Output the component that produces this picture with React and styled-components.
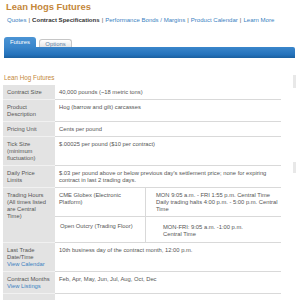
import React from 'react';
import styled, { createGlobalStyle } from 'styled-components';

const Global = createGlobalStyle`
  html, body { margin: 0; padding: 0; background: #fff; }
  body { font-family: "Liberation Sans", Arial, sans-serif; }
`;

const Page = styled.div`
  width: 298px;
  height: 300px;
  overflow: hidden;
  box-sizing: border-box;
  padding: 1px 0 0 3px;
`;

const Title = styled.h1`
  margin: 0 0 0 3px;
  font-size: 9.4px;
  line-height: 12px;
  font-weight: bold;
  color: #c4873a;
`;

const Nav = styled.nav`
  margin: 3px 0 0 4px;
  font-size: 6.05px;
  line-height: 8px;
  color: #555;
  white-space: nowrap;
`;

const NavLink = styled.a`
  color: ${(p) => (p.$current ? '#333' : '#3a7fc1')};
  font-weight: ${(p) => (p.$current ? 'bold' : 'normal')};
  text-decoration: none;
`;

const Sep = styled.span`
  color: #555;
  margin: 0 2px;
`;

const TabRow = styled.div`
  display: flex;
  align-items: flex-end;
  gap: 3px;
  margin: 13px 0 0 1px;
  height: 10px;
`;

const Tab = styled.div`
  box-sizing: border-box;
  width: ${(p) => p.$w}px;
  height: ${(p) => (p.$active ? 10 : 8)}px;
  border-radius: 3px 3px 0 0;
  font-size: 5.9px;
  line-height: ${(p) => (p.$active ? 10 : 8)}px;
  text-align: center;
  color: ${(p) => (p.$active ? '#fff' : '#5d7fa6')};
  background: ${(p) =>
    p.$active ? 'linear-gradient(#4b94d4, #3a86cb)' : 'linear-gradient(#ffffff, #e6e6e6)'};
  border: ${(p) => (p.$active ? 'none' : '1px solid #c6c6c6')};
  border-bottom: none;
`;

const Bar = styled.div`
  margin: 0 3px 0 1px;
  height: 11px;
  border-radius: 0 2px 0 0;
  background: linear-gradient(#3a86cb, #2472bb 70%, #1a5f9f);
`;

const Content = styled.div`
  display: flex;
  align-items: flex-start;
`;

const Main = styled.div`
  width: 280px;
`;

const Gutter = styled.div`
  display: flex;
  flex-direction: column;
  margin-left: 10px;
  width: 3px;
`;

const Mark = styled.div`
  margin-top: ${(p) => p.$top}px;
  height: ${(p) => p.$h}px;
  background: #e8e8e8;
`;

const SubHeading = styled.h2`
  margin: 16px 0 3px 1px;
  font-size: 6.3px;
  line-height: 8px;
  font-weight: normal;
  color: #c4873a;
`;

const Table = styled.div`
  width: 278px;
  font-size: 5.8px;
  line-height: 7px;
  color: #555;
`;

const Row = styled.div`
  display: grid;
  grid-template-columns: 52px 226px;
`;

const Label = styled.div`
  background: #e3e3e3;
  padding: 4px 3px 3px 4px;
  border-bottom: 1px solid #f1f1f1;
`;

const Value = styled.div`
  padding: ${(p) => (p.$flush ? '0' : '4px 4px 3px 4px')};
  border-bottom: 1px solid #d9d9d9;
`;

const SubRow = styled.div`
  display: grid;
  grid-template-columns: 91px 135px;
  border-bottom: ${(p) => (p.$last ? 'none' : '1px solid #d9d9d9')};
`;

const SubCell = styled.div`
  padding: ${(p) => p.$pt}px 2px ${(p) => p.$pb}px ${(p) => p.$pl}px;
  border-right: ${(p) => (p.$divider ? '1px solid #d9d9d9' : 'none')};
  white-space: ${(p) => (p.$nowrap ? 'nowrap' : 'normal')};
`;

const Link = styled.a`
  color: #3a7fc1;
  text-decoration: none;
  display: block;
`;

const navItems = [
  { t: 'Quotes' },
  { t: 'Contract Specifications', current: true },
  { t: 'Performance Bonds / Margins' },
  { t: 'Product Calendar' },
  { t: 'Learn More' },
];

export default function App() {
  return (
    <>
      <Global />
      <Page>
        <Title>Lean Hogs Futures</Title>
        <Nav>
          {navItems.map((n, i) => (
            <React.Fragment key={n.t}>
              {i > 0 && <Sep>|</Sep>}
              <NavLink href="#" $current={n.current}>
                {n.t}
              </NavLink>
            </React.Fragment>
          ))}
        </Nav>
        <TabRow>
          <Tab $active $w={32}>Futures</Tab>
          <Tab $w={33}>Options</Tab>
        </TabRow>
        <Bar />
        <Content>
          <Main>
            <SubHeading>Lean Hog Futures</SubHeading>
            <Table>
              <Row>
                <Label>Contract Size</Label>
                <Value>40,000 pounds (~18 metric tons)</Value>
              </Row>
              <Row>
                <Label>
                  Product
                  <br />
                  Description
                </Label>
                <Value>Hog (barrow and gilt) carcasses</Value>
              </Row>
              <Row>
                <Label>Pricing Unit</Label>
                <Value>Cents per pound</Value>
              </Row>
              <Row>
                <Label>
                  Tick Size
                  <br />
                  (minimum
                  <br />
                  fluctuation)
                </Label>
                <Value>$.00025 per pound ($10 per contract)</Value>
              </Row>
              <Row>
                <Label>
                  Daily Price
                  <br />
                  Limits
                </Label>
                <Value>
                  $.03 per pound above or below previous day's settlement price; none for expiring
                  contract in last 2 trading days.
                </Value>
              </Row>
              <Row>
                <Label>
                  Trading Hours
                  <br />
                  (All times listed
                  <br />
                  are Central
                  <br />
                  Time)
                </Label>
                <Value $flush>
                  <SubRow>
                    <SubCell $divider $pt={4} $pb={3} $pl={4}>
                      CME Globex (Electronic
                      <br />
                      Platform)
                    </SubCell>
                    <SubCell $nowrap $pt={4} $pb={3} $pl={10}>
                      MON 9:05 a.m. - FRI 1:55 p.m. Central Time
                      <br />
                      Daily trading halts 4:00 p.m. - 5:00 p.m. Central
                      <br />
                      Time
                    </SubCell>
                  </SubRow>
                  <SubRow $last>
                    <SubCell $divider $pt={6} $pb={5} $pl={5}>
                      Open Outcry (Trading Floor)
                    </SubCell>
                    <SubCell $nowrap $pt={7} $pb={4} $pl={17}>
                      MON-FRI: 9:05 a.m. -1:00 p.m.
                      <br />
                      Central Time
                    </SubCell>
                  </SubRow>
                </Value>
              </Row>
              <Row>
                <Label>
                  Last Trade
                  <br />
                  Date/Time
                  <Link href="#">View Calendar</Link>
                </Label>
                <Value>10th business day of the contract month, 12:00 p.m.</Value>
              </Row>
              <Row>
                <Label>
                  Contract Months
                  <Link href="#">View Listings</Link>
                </Label>
                <Value>Feb, Apr, May, Jun, Jul, Aug, Oct, Dec</Value>
              </Row>
              <Row>
                <Label>&nbsp;</Label>
                <Value>&nbsp;</Value>
              </Row>
            </Table>
          </Main>
          <Gutter>
            <Mark $top={17} $h={13} />
            <Mark $top={74} $h={11} />
          </Gutter>
        </Content>
      </Page>
    </>
  );
}
